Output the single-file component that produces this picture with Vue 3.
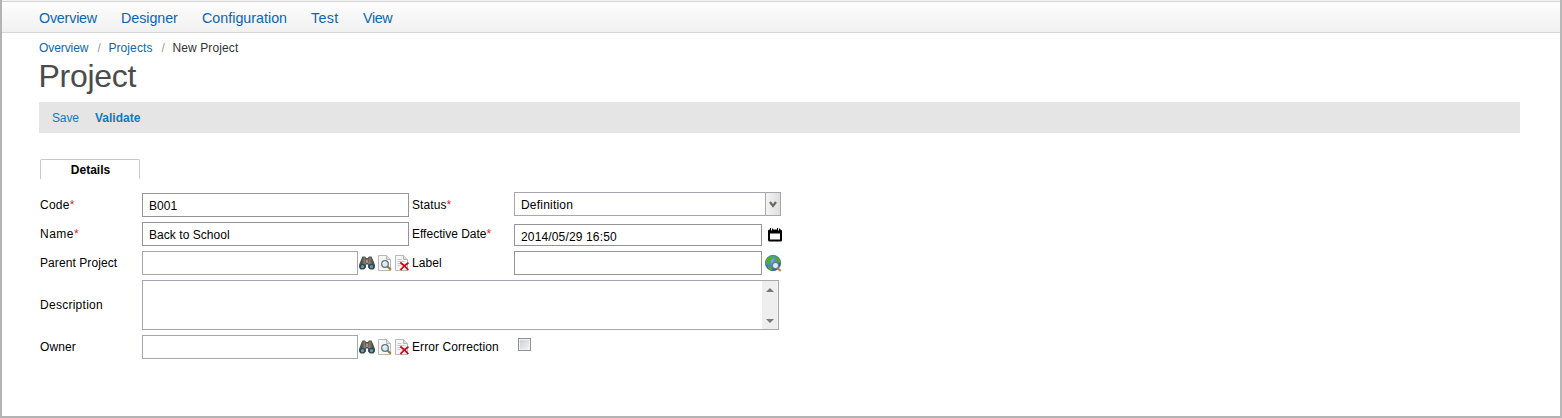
<script setup>
const nav = [
  { text: 'Overview', w: 82, sp: -0.2 },
  { text: 'Designer', w: 81, sp: -0.05 },
  { text: 'Configuration', w: 109, sp: 0 },
  { text: 'Test', w: 52, sp: 0.3 },
  { text: 'View', w: 40, sp: -0.35 },
]
const lookups = [
  { id: 'parent', label: 'Parent Project', side: 'Label' },
  { id: 'owner', label: 'Owner', side: 'Error Correction' },
]
</script>

<template>
  <div class="window">
    <svg class="defs" width="0" height="0">
      <defs>
        <linearGradient id="barrel" x1="0" y1="0" x2="1" y2="0">
          <stop offset="0" stop-color="#45423b" />
          <stop offset=".5" stop-color="#aaa69c" />
          <stop offset="1" stop-color="#4a473f" />
        </linearGradient>
        <radialGradient id="sea" cx=".35" cy=".3" r=".8">
          <stop offset="0" stop-color="#7db7ee" />
          <stop offset="1" stop-color="#12499b" />
        </radialGradient>
        <symbol id="binoculars" viewBox="0 0 16 16">
          <path d="M3.500 1.500h2.500l1.300 1.500h1.400L10 1.500h2.500l1.800 4L16 10v2.500L14.500 14.500h-3.500L9 12.500V9.500H7v3L5 14.500H1.500L0 12.500V10L1.700 5.500z" fill="#55514a" />
          <path d="M3.500 2.500h2.500l.7 6.500-4.700.5zM10 2.500h2.500l1.500 7-4.700-.5z" fill="url(#barrel)" />
          <path d="M7 4.500h2v3.500H7z" fill="#98948a" />
          <circle cx="3.500" cy="11.500" r="2.600" fill="#2b4656" />
          <circle cx="12.500" cy="11.500" r="2.600" fill="#2b4656" />
          <circle cx="3.500" cy="11.700" r="1.600" fill="#5e9fbf" />
          <circle cx="12.500" cy="11.700" r="1.600" fill="#5e9fbf" />
        </symbol>
        <symbol id="sheet" viewBox="0 0 16 16">
          <path d="M1.500.5h8l4 4v11h-12z" fill="#f6f6f5" stroke="#b9b9b9" />
          <path d="M9.500.5v4h4" fill="#dedede" stroke="#b5b5b5" />
        </symbol>
        <symbol id="preview" viewBox="0 0 16 16">
          <use href="#sheet" />
          <path d="M10.500 11.500l3.300 3.300" stroke="#a8792c" stroke-width="2.200" />
          <circle cx="8" cy="9" r="3.300" fill="#d3ebfa" stroke="#65727a" stroke-width="1.300" />
          <path d="M6 8.700Q6.500 7 8.400 7" fill="none" stroke="#fff" />
        </symbol>
        <symbol id="clear" viewBox="0 0 16 16">
          <use href="#sheet" />
          <path d="M3.500 4.500h4M3.500 6.500h7M3.500 8.500h4M3.500 10.500h3" stroke="#c7c7c7" />
          <path d="M6.300 7.500Q10.500 10.500 14.300 15M14.500 7.800Q10 10.500 6.500 15" fill="none" stroke="#c60c18" stroke-width="1.900" />
        </symbol>
      </defs>
    </svg>
    <nav class="menu">
      <a v-for="n in nav" :key="n.text" :style="{ width: n.w + 'px', letterSpacing: n.sp + 'px' }">{{ n.text }}</a>
    </nav>
    <main>
      <div class="crumbs"><a>Overview</a><i>/</i><a class="mid">Projects</a><i class="last">/</i><span>New Project</span></div>
      <h1>Project</h1>
      <div class="actions"><a>Save</a><a class="strong">Validate</a></div>
      <div class="tab">Details</div>
      <form class="form" @submit.prevent>
        <label class="code">Code<b>*</b></label>
        <div class="box filled">B001</div>
        <label>Status<b>*</b></label>
        <div class="box select">
          <span>Definition</span>
          <div class="drop"><svg width="8" height="8" viewBox="0 0 8 8"><path d="M1 1l3 4 3-4" fill="none" stroke="#686868" stroke-width="2.200" /></svg></div>
        </div>

        <label class="name">Name<b>*</b></label>
        <div class="box filled">Back to School</div>
        <label class="effective">Effective Date<b>*</b></label>
        <div class="pair">
          <div class="box date">2014/05/29 16:50</div>
          <svg class="calendar" width="14" height="14" viewBox="0 0 14 14">
            <path d="M0 3q0-1.500 1.500-1.500H2V0h1v2.500h1V.5h1v1h4V0h1v2.500h1V.5h1v1h.5Q14 1.500 14 3v9q0 1.500-1.500 1.500h-11Q0 13.500 0 12zM2 5.500v6h10v-6z" fill="#000" fill-rule="evenodd" />
          </svg>
        </div>

        <template v-for="(l, i) in lookups" :key="l.id">
          <label>{{ l.label }}</label>
          <div class="pair">
            <div class="box lookup"></div>
            <svg class="ico first" width="16" height="16"><use href="#binoculars" /></svg>
            <svg class="ico" width="16" height="16"><use href="#preview" /></svg>
            <svg class="ico third" width="16" height="16"><use href="#clear" /></svg>
          </div>
          <label>{{ l.side }}</label>
          <div v-if="i === 0" class="pair">
            <div class="box short"></div>
            <svg class="globe" width="17" height="17" viewBox="0 0 17 17">
              <circle cx="8" cy="8" r="7.700" fill="url(#sea)" stroke="#235c70" stroke-width=".6" />
              <path d="M1 5Q3 1 7 .7L8.500 2 7 4 5.500 5.500 6 8 4 9.500 2.500 8 1 8.500zM10 1.200Q14 2.500 15.400 6.500L14 8 11 6 9.500 3.500zM3 11l3 .5 1.500 2L7 15.500Q4.500 15 3 13z" fill="#52aa35" />
              <path d="M12.500 13l3.200 3" stroke="#b38335" stroke-width="2" />
              <circle cx="10.500" cy="10.500" r="3.100" fill="#d8ecf6" stroke="#6c7e87" stroke-width="1.200" />
            </svg>
          </div>
          <div v-else class="checkcell"><span class="check"></span></div>
          <template v-if="i === 0">
            <label class="description">Description</label>
            <div class="box area">
              <div class="scroll">
                <svg width="8" height="4" viewBox="0 0 8 4"><path d="M4 0l4 4H0z" fill="#777" /></svg>
                <svg width="8" height="4" viewBox="0 0 8 4"><path d="M0 0h8L4 4z" fill="#777" /></svg>
              </div>
            </div>
          </template>
        </template>
      </form>
    </main>
  </div>
</template>

<style>
body { margin: 0; }
</style>
<style scoped>
* { box-sizing: border-box; }
.window {
  height: 418px; background: #fff; overflow: hidden;
  border-style: solid; border-color: #d8d8d8 #b8b8b8 #b3b3b3 #b3b3b3; border-width: 0 2px 2px;
  font: 12px/14px "Liberation Sans", Arial, sans-serif; color: #000;
}
.defs { position: absolute; }
svg { display: block; flex: none; }
.menu {
  display: flex; height: 33px; padding: 3px 0 0 37px; font-size: 14.300px; line-height: 30px; color: #0c65b0;
  border-bottom: 1px solid #d5d5d5;
  background: linear-gradient(#f2f2f2 0 1px, #d3d3d3 1px 2px, #fdfdfd 2px, #f1f1f1 100%);
}
main { padding: 8px 40px 0 37px; }
.crumbs { display: flex; height: 14px; color: #333; }
.crumbs a { color: #0c65b0; letter-spacing: -.08px; }
.crumbs .mid { letter-spacing: .1px; }
.crumbs i { font-style: normal; color: #999; width: 20px; padding-left: 9px; }
.crumbs .last { padding-left: 9px; }
.crumbs span { letter-spacing: .1px; }
h1 { margin: 4px 0 0; font-size: 32px; line-height: 34px; letter-spacing: -.3px; font-weight: 400; color: #4b4b4b; height: 43px; text-indent: -.5px; }
.actions { height: 31px; background: #e5e5e5; display: flex; gap: 16px; padding: 9px 13px; color: #0f7abf; }
.actions a:first-child { width: 27px; letter-spacing: -.15px; }
.strong { font-weight: 700; }
.tab {
  margin: 26px 0 0 1px; width: 100px; height: 20px; padding: 3px 0 0 1px; text-align: center; font-weight: 700;
  border: 1px solid #cacaca; border-bottom: 0; border-radius: 2px 2px 0 0;
}
.form {
  margin: 14px 0 0 1px; display: grid; grid-template-columns: 102px 270px 102px 267px;
  grid-template-rows: 24px 24px 24px 50px 24px; row-gap: 5px;
}
.form label { align-self: center; white-space: nowrap; letter-spacing: .08px; }
.form .code { letter-spacing: .25px; }
.form .name { letter-spacing: .5px; }
.form .effective { letter-spacing: 0; }
.form .description { letter-spacing: .27px; }
.form b { color: #e3222b; font-weight: 400; }
.box { border: 1px solid #a5a6ae; height: 24px; background: #fff; padding: 5px 6px; }
.filled, .date, .short { border-color: #949498; }
.filled { width: 267px; letter-spacing: .05px; }
.select { display: flex; justify-content: space-between; padding: 0 0 0 6px; margin-top: -1px; line-height: 24px; letter-spacing: .2px; }
.drop { width: 15px; border-left: 1px solid #a9a9ae; background: linear-gradient(90deg, #f4f4f4, #dedede); padding: 8px 0 0 3px; }
.pair { display: flex; }
.date, .short { flex: 0 0 248px; }
.date { height: 22px; margin-top: 2px; letter-spacing: .15px; }
.calendar { margin: 6px 0 0 6px; }
.lookup { width: 216px; }
.ico { margin: 4px 0 0 2px; }
.ico.first { margin-left: 1px; }
.ico.third { margin-left: 1px; }
.globe { margin: 4px 0 0 3px; }
.area { grid-column: 2 / 5; width: 637px; height: 50px; padding: 0; display: flex; justify-content: flex-end; }
.scroll { width: 16px; background: #eee; border-right: 1px solid #f5f5f5; display: flex; flex-direction: column; justify-content: space-between; align-items: center; padding: 7px 0 6px 1px; }
.checkcell { padding: 3px 0 0 4px; }
.check { display: block; width: 13px; height: 13px; border: 1px solid #8e8f8f; background: linear-gradient(135deg, #c9ccd0, #f5f5f5); box-shadow: inset 0 0 0 1px #f3f3f3; }
</style>
